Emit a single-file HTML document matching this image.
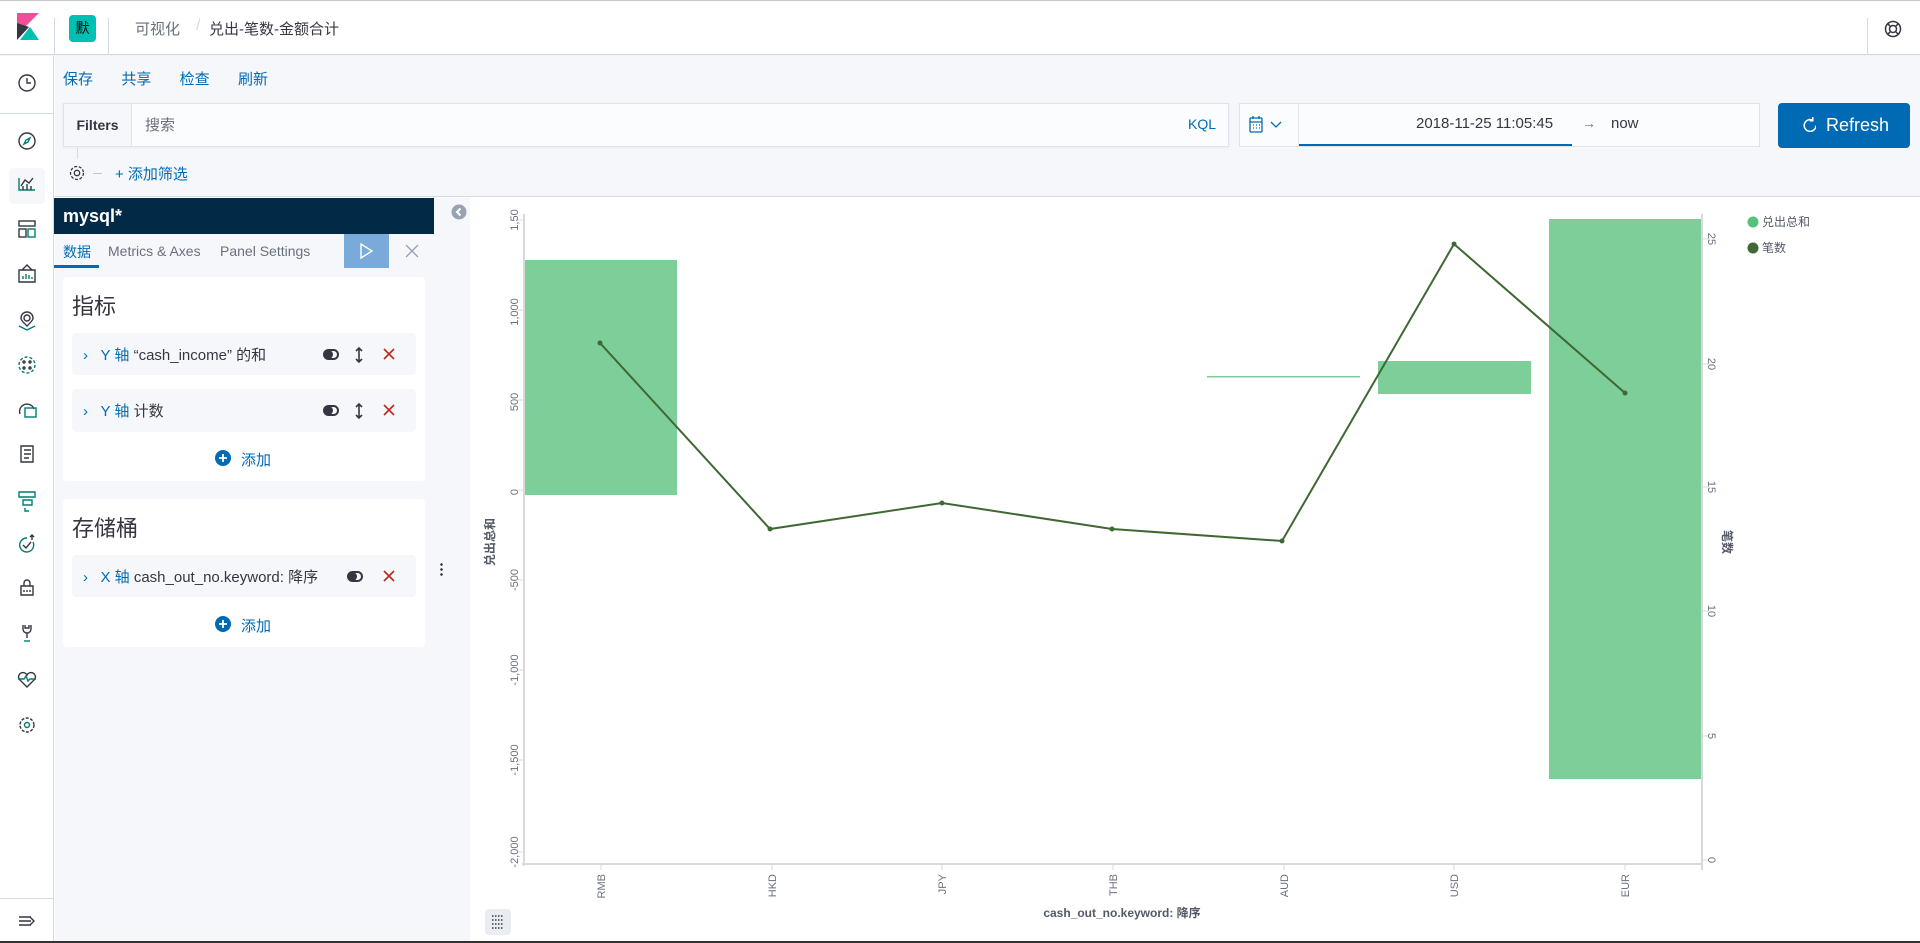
<!DOCTYPE html>
<html><head><meta charset="utf-8"><style>
*{box-sizing:border-box;margin:0;padding:0}
body{width:1920px;height:943px;overflow:hidden;background:#fff;font-family:"Liberation Sans","Noto Sans CJK SC",sans-serif;color:#343741;position:relative}
.a{position:absolute}
.blue{color:#006bb4}
</style></head><body>
<div class="a" style="left:0;top:0;width:1920px;height:1px;background:#c8c8c8"></div>
<!-- header -->
<div class="a" style="left:0;top:1px;width:1920px;height:54px;background:#fff;border-bottom:1px solid #d3dae6;box-shadow:0 1px 3px rgba(0,0,0,.08)"></div>
<svg class="a" style="left:17px;top:13px" width="22" height="27" viewBox="0 0 22 27"><polygon points="0,0 22,0 0,22" fill="#f04e98"/><polygon points="0,10 12,14 0,27" fill="#343741"/><polygon points="3,27 22,27 13,14" fill="#00bfb3"/></svg>
<div class="a" style="left:54px;top:18px;width:1px;height:37px;background:#d3dae6"></div>
<div class="a" style="left:69px;top:15px;width:27px;height:27px;background:#00bfb3;border-radius:4px;color:#000;font-size:14px;text-align:center;line-height:27px">默</div>
<div class="a" style="left:108px;top:18px;width:1px;height:37px;background:#d3dae6"></div>
<div class="a" style="left:135px;top:18px;font-size:15px;color:#69707d">可视化</div>
<div class="a" style="left:196px;top:17px;font-size:16px;color:#d3dae6">/</div>
<div class="a" style="left:209px;top:18px;font-size:15px;color:#343741">兑出-笔数-金额合计</div>
<div class="a" style="left:1867px;top:18px;width:1px;height:37px;background:#d3dae6"></div>
<svg class="a" style="left:1884px;top:20px" width="18" height="18" viewBox="0 0 18 18" fill="none" stroke="#343741" stroke-width="1.5"><circle cx="9" cy="9" r="7.5"/><circle cx="9" cy="9" r="3.5"/><path d="M3.7 3.7l2.8 2.8M14.3 3.7l-2.8 2.8M3.7 14.3l2.8-2.8M14.3 14.3l-2.8-2.8"/></svg>
<!-- nav -->
<div class="a" style="left:0;top:56px;width:54px;height:887px;background:#fff;border-right:1px solid #d3dae6"></div>
<div class="a" style="left:0;top:113px;width:54px;height:1px;background:#d3dae6"></div>
<div class="a" style="left:9px;top:168px;width:36px;height:36px;background:#f5f7fa;border-radius:4px"></div>
<svg class="a" style="left:0;top:56px" width="54" height="887" viewBox="0 56 54 887" fill="none" stroke="#343741" stroke-width="1.4">
<circle cx="27" cy="83" r="8"/><path d="M27 78v5h4"/>
<circle cx="27" cy="141" r="8"/><path d="M30 138l-4 2-2 4 4-2z" stroke="#017d73"/>
<path d="M19 178v12h16" stroke="#017d73"/><path d="M21 186l4-6 4 3 4-5M23 190v-4M27 190v-6M31 190v-4"/>
<rect x="19" y="221" width="16" height="5"/><rect x="19" y="229" width="7" height="8"/><rect x="28" y="229" width="7" height="8" stroke="#017d73"/>
<path d="M19 270h16v12H19zM22 270l5-5 5 5"/><path d="M23 279v-3M26 279v-5M29 279v-4M32 279v-2" stroke="#017d73"/>
<circle cx="27" cy="318" r="3"/><path d="M27 326c-4-4-6-6-6-8a6 6 0 0112 0c0 2-2 4-6 8z"/><path d="M19 326l8 4 8-4" stroke="#017d73"/>
<circle cx="27" cy="365" r="8" stroke-dasharray="3 2" stroke="#017d73"/><circle cx="24" cy="362" r="1"/><circle cx="30" cy="362" r="1"/><circle cx="24" cy="368" r="1"/><circle cx="30" cy="368" r="1"/>
<path d="M20 414a7 7 0 0114-5"/><rect x="25" y="408" width="11" height="9" stroke="#017d73"/>
<path d="M21 446h12v16H21zM24 450h7M24 454h7M24 458h5"/>
<path d="M19 492h16v5H19zM23 500h9v5h-9zM25 508v3h4" stroke="#017d73"/>
<path d="M27 538a7 7 0 106 4" stroke="#017d73"/><path d="M23 545l3 3 5-6M32 535v5M30 537l2-2 2 2"/>
<path d="M21 586h12v9H21zM24 586v-3a3 3 0 016 0v3M24 590v2M27 590v2M30 590v2"/>
<path d="M23 625v4a4 4 0 008 0v-4M25 625v3h4v-3M27 633v5"/><path d="M24 641h6" stroke="#017d73"/>
<path d="M27 687l-8-8a4 4 0 018-4 4 4 0 018 4z"/><path d="M18 679h6l2-3 2 5 2-2h6" stroke="#017d73"/>
<circle cx="27" cy="725" r="7" stroke-dasharray="3 1.5"/><circle cx="27" cy="725" r="2.5" stroke="#017d73"/>
<path d="M19 917h12M19 921h12M19 925h12M30 917l4 4-4 4"/>
</svg>
<div class="a" style="left:0;top:898px;width:54px;height:1px;background:#d3dae6"></div>
<!-- top bar region -->
<div class="a" style="left:55px;top:56px;width:1865px;height:141px;background:#f5f7fa;border-bottom:1px solid #d3dae6"></div>
<div class="a blue" style="left:63px;top:68px;font-size:15px;word-spacing:10px">保存&nbsp;&nbsp;共享&nbsp;&nbsp;检查&nbsp;&nbsp;刷新</div>
<div class="a" style="left:63px;top:103px;width:1166px;height:44px;background:#fbfcfd;border:1px solid #dfe3ea;box-shadow:0 1px 2px rgba(0,0,0,.06)"></div>
<div class="a" style="left:63px;top:103px;width:69px;height:44px;background:#f5f7fa;border:1px solid #dfe3ea;font-weight:bold;font-size:14px;line-height:42px;text-align:center">Filters</div>
<div class="a" style="left:145px;top:114px;font-size:15px;color:#69707d">搜索</div>
<div class="a blue" style="left:1188px;top:116px;font-size:14px">KQL</div>
<div class="a" style="left:1239px;top:103px;width:521px;height:44px;background:#fbfcfd;border:1px solid #dfe3ea"></div>
<div class="a" style="left:1298px;top:104px;width:1px;height:42px;background:#dfe3ea"></div>
<svg class="a" style="left:1249px;top:116px" width="40" height="18" viewBox="0 0 40 18" fill="none" stroke="#006bb4" stroke-width="1.3"><rect x="1" y="2" width="12" height="14" rx="1"/><path d="M1 6h12M4 0v3M10 0v3M4 9h1M7 9h1M10 9h1M4 12h1M7 12h1M10 12h1"/><path d="M22 6l5 5 5-5"/></svg>
<div class="a" style="left:1416px;top:115px;font-size:15px;color:#343741">2018-11-25 11:05:45</div>
<div class="a" style="left:1299px;top:144px;width:273px;height:2px;background:#006bb4"></div>
<div class="a" style="left:1582px;top:115px;font-size:14px;color:#69707d">→</div>
<div class="a" style="left:1611px;top:115px;font-size:15px">now</div>
<div class="a" style="left:1778px;top:103px;width:132px;height:45px;background:#006bb4;border-radius:4px;color:#fff;font-size:18px;line-height:45px;padding-left:48px">Refresh</div>
<svg class="a" style="left:1801px;top:117px" width="15" height="15" viewBox="0 0 14 14" fill="none" stroke="#fff" stroke-width="1.4"><path d="M11 3a5.5 5.5 0 103 5"/><path d="M11 0v3.5h-3"/></svg>
<svg class="a" style="left:68px;top:164px" width="18" height="18" viewBox="0 0 18 18" fill="none" stroke="#343741" stroke-width="1.3"><circle cx="9" cy="9" r="2.7"/><circle cx="9" cy="9" r="6.5" stroke-dasharray="3 1.6"/></svg>
<div class="a" style="left:77px;top:148px;width:1px;height:11px;background:#d3dae6"></div>
<div class="a" style="left:93px;top:173px;width:9px;height:1px;background:#c0c5cf"></div>
<div class="a blue" style="left:115px;top:163px;font-size:15px">+ 添加筛选</div>
<!-- sidebar -->
<div class="a" style="left:55px;top:198px;width:415px;height:745px;background:#f5f7fa"></div>
<div class="a" style="left:54px;top:198px;width:380px;height:36px;background:#022a46;color:#fff;font-weight:bold;font-size:18px;line-height:36px;padding-left:9px">mysql*</div>
<div class="a blue" style="left:63px;top:242px;font-size:14px">数据</div>
<div class="a" style="left:54px;top:265px;width:45px;height:3px;background:#006bb4"></div>
<div class="a" style="left:108px;top:243px;font-size:14px;color:#69707d">Metrics &amp; Axes</div>
<div class="a" style="left:220px;top:243px;font-size:14px;color:#69707d">Panel Settings</div>
<div class="a" style="left:344px;top:234px;width:45px;height:34px;background:#79aad9"></div>
<svg class="a" style="left:358px;top:242px" width="16" height="18" viewBox="0 0 16 18" fill="none" stroke="#fff" stroke-width="1.4"><path d="M3 2l11 7-11 7z"/></svg>
<svg class="a" style="left:405px;top:244px" width="14" height="14" viewBox="0 0 14 14" stroke="#98a2b3" stroke-width="1.4"><path d="M1 1l12 12M13 1L1 13"/></svg>
<div class="a" style="left:63px;top:277px;width:362px;height:204px;background:#fff;border-radius:4px"></div>
<div class="a" style="left:72px;top:289px;font-size:22px">指标</div>
<div class="a" style="left:72px;top:333px;width:344px;height:42px;background:#f5f7fa;border-radius:4px"></div>
<div class="a" style="left:72px;top:389px;width:344px;height:43px;background:#f5f7fa;border-radius:4px"></div>
<div class="a" style="left:63px;top:499px;width:362px;height:148px;background:#fff;border-radius:4px"></div>
<div class="a" style="left:72px;top:511px;font-size:22px">存储桶</div>
<div class="a" style="left:72px;top:555px;width:344px;height:42px;background:#f5f7fa;border-radius:4px"></div>
<div class="a blue" style="left:83px;top:344px;font-size:15px">›&nbsp;&nbsp;&nbsp;Y 轴 <span style="color:#343741">“cash_income” 的和</span></div>
<div class="a blue" style="left:83px;top:400px;font-size:15px">›&nbsp;&nbsp;&nbsp;Y 轴 <span style="color:#343741">计数</span></div>
<div class="a blue" style="left:83px;top:566px;font-size:15px">›&nbsp;&nbsp;&nbsp;X 轴 <span style="color:#343741">cash_out_no.keyword: 降序</span></div>
<svg class="a" style="left:0;top:0" width="440" height="660" viewBox="0 0 440 660">
<g fill="none" stroke="#343741" stroke-width="2"><rect x="324" y="350" width="14" height="9" rx="4.5"/><rect x="324" y="406" width="14" height="9" rx="4.5"/><rect x="348" y="572" width="14" height="9" rx="4.5"/></g>
<circle cx="328.5" cy="354.5" r="4.5" fill="#343741"/><circle cx="328.5" cy="410.5" r="4.5" fill="#343741"/><circle cx="352.5" cy="576.5" r="4.5" fill="#343741"/>
<g stroke="#343741" stroke-width="1.6" fill="none"><path d="M359 348v14M356 351l3-3 3 3M356 359l3 3 3-3M359 404v14M356 407l3-3 3 3M356 415l3 3 3-3"/></g>
<g stroke="#bd271e" stroke-width="1.6"><path d="M384 349l10 10M394 349l-10 10M384 405l10 10M394 405l-10 10M384 571l10 10M394 571l-10 10"/></g>
<circle cx="223" cy="458" r="8" fill="#006bb4"/><path d="M219 458h8M223 454v8" stroke="#fff" stroke-width="1.8"/>
<circle cx="223" cy="624" r="8" fill="#006bb4"/><path d="M219 624h8M223 620v8" stroke="#fff" stroke-width="1.8"/>
</svg>
<div class="a blue" style="left:241px;top:449px;font-size:15px">添加</div>
<div class="a blue" style="left:241px;top:615px;font-size:15px">添加</div>
<div class="a" style="left:434px;top:198px;width:36px;height:745px;background:#f5f7fa"></div>
<svg class="a" style="left:451px;top:204px" width="16" height="16" viewBox="0 0 16 16"><circle cx="8" cy="8" r="7.5" fill="#98a2b3"/><path d="M9.5 4.5L6 8l3.5 3.5" stroke="#fff" stroke-width="2" fill="none"/></svg>
<div class="a" style="left:440px;top:562px;width:3px;height:15px;background:radial-gradient(circle,#343741 1.2px,transparent 1.4px) 0 0/3px 5px"></div>
<!-- chart -->
<svg class="a" style="left:470px;top:198px" width="1450" height="745" viewBox="470 198 1450 745" font-family="Liberation Sans, Noto Sans CJK SC, sans-serif">
<rect x="524" y="260" width="153" height="235" fill="#7dce98"/>
<rect x="1207" y="376" width="153" height="1.5" fill="#7dce98"/>
<rect x="1378" y="361" width="153" height="33" fill="#7dce98"/>
<rect x="1549" y="219" width="152" height="560" fill="#7dce98"/>
<g stroke="#d9d9d9" stroke-width="2" fill="none"><path d="M524 214V866M1702 214V870M522 864H1702"/></g>
<g stroke="#d9d9d9" stroke-width="1"><path d="M518 220h6M518 310h6M518 400h6M518 490h6M518 580h6M518 670h6M518 760h6M518 852h6M1702 239h7M1702 364h7M1702 487h7M1702 611h7M1702 736h7M1702 860h7M601 864v6M772 864v6M942 864v6M1113 864v6M1284 864v6M1454 864v6M1625 864v6"/></g>
<polyline points="600,343 770,529 942,503 1112,529 1282,541 1454,244 1625,393" fill="none" stroke="#3f6833" stroke-width="2"/>
<g fill="#3f6833"><circle cx="600" cy="343" r="2.5"/><circle cx="770" cy="529" r="2.5"/><circle cx="942" cy="503" r="2.5"/><circle cx="1112" cy="529" r="2.5"/><circle cx="1282" cy="541" r="2.5"/><circle cx="1454" cy="244" r="2.5"/><circle cx="1625" cy="393" r="2.5"/></g>
<g font-size="11" fill="#6a717d" text-anchor="middle">
<text transform="translate(518,220) rotate(-90)">1,50</text>
<text transform="translate(518,312) rotate(-90)">1,000</text>
<text transform="translate(518,402) rotate(-90)">500</text>
<text transform="translate(518,492) rotate(-90)">0</text>
<text transform="translate(518,580) rotate(-90)">-500</text>
<text transform="translate(518,670) rotate(-90)">-1,000</text>
<text transform="translate(518,760) rotate(-90)">-1,500</text>
<text transform="translate(518,852) rotate(-90)">-2,000</text>
<text transform="translate(1708,239) rotate(90)">25</text>
<text transform="translate(1708,364) rotate(90)">20</text>
<text transform="translate(1708,487) rotate(90)">15</text>
<text transform="translate(1708,611) rotate(90)">10</text>
<text transform="translate(1708,736) rotate(90)">5</text>
<text transform="translate(1708,860) rotate(90)">0</text>
</g>
<g font-size="11" fill="#6a717d" text-anchor="end">
<text transform="translate(605,874) rotate(-90)">RMB</text>
<text transform="translate(776,874) rotate(-90)">HKD</text>
<text transform="translate(946,874) rotate(-90)">JPY</text>
<text transform="translate(1117,874) rotate(-90)">THB</text>
<text transform="translate(1288,874) rotate(-90)">AUD</text>
<text transform="translate(1458,874) rotate(-90)">USD</text>
<text transform="translate(1629,874) rotate(-90)">EUR</text>
</g>
<text transform="translate(494,542) rotate(-90)" font-size="12" font-weight="bold" fill="#535966" text-anchor="middle">兑出总和</text>
<text transform="translate(1723,542) rotate(90)" font-size="12" font-weight="bold" fill="#535966" text-anchor="middle">笔数</text>
<text x="1122" y="917" font-size="12" font-weight="bold" fill="#535966" text-anchor="middle">cash_out_no.keyword: 降序</text>
<circle cx="1753" cy="222" r="5.5" fill="#57c17b"/><text x="1762" y="226" font-size="12" fill="#535966">兑出总和</text>
<circle cx="1753" cy="248" r="5.5" fill="#3f6833"/><text x="1762" y="252" font-size="12" fill="#535966">笔数</text>
<rect x="485" y="909" width="26" height="26" rx="4" fill="#e9ecf0"/>
<path d="M492 916h12M492 920h12M492 924h12M492 928h12" stroke="#343741" stroke-width="1.4" stroke-dasharray="1.5 1.5"/>
</svg>
<div class="a" style="left:0;top:941px;width:1920px;height:2px;background:#333"></div>
</body></html>
